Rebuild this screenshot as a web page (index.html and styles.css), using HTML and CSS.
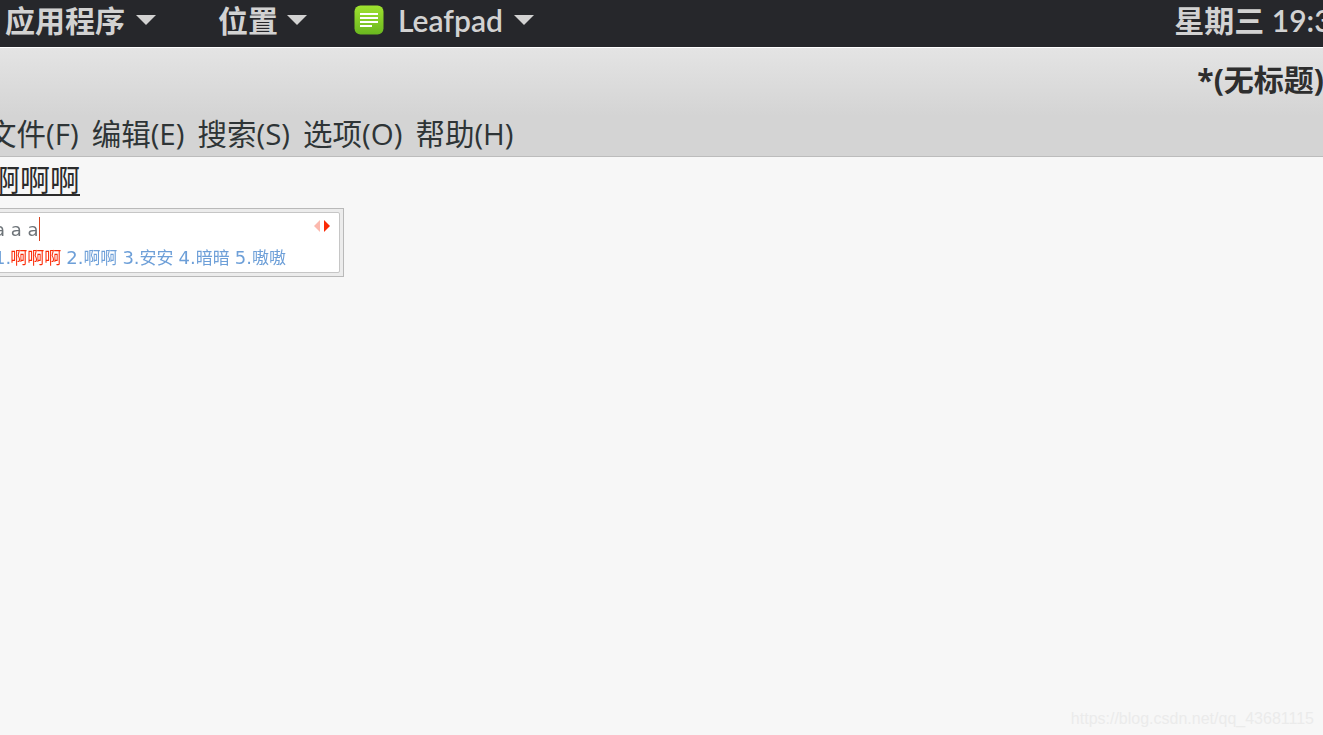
FILE: index.html
```html
<!DOCTYPE html>
<html lang="zh-CN">
<head>
<meta charset="utf-8">
<title>Leafpad</title>
<link rel="stylesheet" href="styles.css">
</head>
<body>
<header class="topbar">
  <div class="top-item apps">应用程序<span class="caret"></span></div>
  <div class="top-item places">位置<span class="caret"></span></div>
  <div class="top-item leaf">
    <svg class="leaf-icon" width="30" height="30" viewBox="0 0 30 30">
      <defs><linearGradient id="lg" x1="0" y1="0" x2="0" y2="1"><stop offset="0" stop-color="#9fe22f"/><stop offset="1" stop-color="#6ab71f"/></linearGradient></defs>
      <rect x="0.5" y="0.5" width="29" height="29" rx="6" fill="url(#lg)"/>
      <path d="M6 8h18v2h-18zM6 12h18v2h-18zM6 16h18v2h-18zM6 20h12v2h-12z" fill="#fff"/>
    </svg>
    <span class="leaf-name">Leafpad</span><span class="caret"></span>
  </div>
  <div class="clock">星期三 19:30</div>
</header>
<div class="titlebar"><span class="title">*(无标题)</span></div>
<nav class="menubar">
  <span class="menu-first">文件(F)</span><span>编辑(E)</span><span>搜索(S)</span><span>选项(O)</span><span>帮助(H)</span>
</nav>
<main class="editor">
  <div class="typed"><u>啊啊啊</u></div>
  <div class="ime">
    <div class="ime-inner">
      <div class="preedit"><span class="preedit-text">a a a</span><span class="cursor"></span>
        <span class="arrows"><span class="arrow-l"></span><span class="arrow-r"></span></span>
      </div>
      <div class="cands"><span>1.<em>啊啊啊</em></span><span>2.<i>啊啊</i></span><span>3.<i>安安</i></span><span>4.<i>暗暗</i></span><span>5.<i>嗷嗷</i></span></div>
    </div>
  </div>
  <div class="watermark">https://blog.csdn.net/qq_43681115</div>
</main>
</body>
</html>
```
FILE: styles.css
```css
* { box-sizing: border-box; }
html, body { margin: 0; height: 735px; overflow: hidden; }
body {
  width: 1323px;
  display: flex;
  flex-direction: column;
  background: #f7f7f7;
  font-family: "Open Sans", "Noto Sans CJK SC", sans-serif;
}
.topbar {
  height: 47px;
  flex: none;
  display: flex;
  align-items: center;
  background: #26272b;
  color: #d2d2d2;
  font-family: "Lato", "Noto Sans CJK SC", sans-serif;
  font-size: 30px;
  font-weight: 600;
  line-height: 40px;
  white-space: nowrap;
  overflow: hidden;
  padding-left: 5px;
  padding-bottom: 7px;
}
.top-item { display: flex; align-items: center; }
.caret {
  width: 0;
  height: 0;
  margin-left: 11px;
  border-left: 10px solid transparent;
  border-right: 10px solid transparent;
  border-top: 10px solid #d2d2d2;
}
.places { margin-left: 62px; }
.places .caret { margin-left: 9px; }
.leaf { margin-left: 47px; }
.leaf-icon { display: block; }
.leaf-name { margin-left: 14px; }
.clock { margin-left: auto; margin-right: -26px; }
.titlebar {
  height: 69px;
  flex: none;
  border-top: 1px solid #fff;
  background: linear-gradient(#e4e4e4, #d4d4d4);
  display: flex;
  justify-content: flex-end;
  padding-top: 12px;
  white-space: nowrap;
}
.title { font-size: 30px; font-weight: 700; color: #2e2e2e; line-height: 40px; margin-right: -1px; }
.menubar {
  height: 41px;
  flex: none;
  background: #d4d4d4;
  border-bottom: 1px solid #bcbcbc;
  display: flex;
  gap: 13px;
  font-size: 29.5px;
  color: #2e3436;
  line-height: 36px;
  white-space: nowrap;
}
.menu-first { margin-left: -13px; }
.editor { flex: 1; position: relative; background: #f7f7f7; overflow: hidden; }
.typed {
  font-size: 30px;
  line-height: 46px;
  color: #2b2b2b;
  margin-left: -10px;
}
.typed u { text-underline-offset: 3px; text-decoration-thickness: 2px; }
.ime {
  position: absolute;
  left: -10px;
  top: 51px;
  width: 354px;
  height: 69px;
  background: #ececec;
  border: 1px solid #b9b9b9;
  padding: 3px;
  will-change: transform;
}
.ime-inner {
  height: 61px;
  background: #fff;
  border: 1px solid #c6c6c6;
  border-radius: 2px;
  padding-left: 4px;
  font-family: "DejaVu Sans", "Noto Sans CJK SC", sans-serif;
}
.preedit {
  height: 30px;
  display: flex;
  align-items: center;
  font-size: 18px;
  color: #6d7378;
  padding-top: 2px;
}
.preedit-text { margin-left: -5px; }
.cursor { width: 1px; height: 24px; background: #d8431f; }
.arrows { display: flex; gap: 3px; margin-left: auto; margin-right: 9px; margin-top: -7px; }
.arrow-l, .arrow-r { width: 0; height: 0; border-top: 6px solid transparent; border-bottom: 6px solid transparent; }
.arrow-l { border-right: 6px solid #fcb9ae; margin-right: 1px; }
.arrow-r { border-left: 6px solid #fb2a06; }
.cands {
  display: flex;
  gap: 5px;
  font-size: 18px;
  line-height: 30px;
  margin-left: -5px;
  color: #6d9fd8;
  white-space: nowrap;
}
.cands em, .cands i { font-style: normal; font-size: 17px; }
.cands em { color: #fb2a06; margin-left: -1px; }
.watermark {
  position: absolute;
  right: 9px;
  bottom: 7px;
  font-family: "Liberation Sans", sans-serif;
  font-size: 16px;
  color: #ebebeb;
  white-space: nowrap;
}
```
